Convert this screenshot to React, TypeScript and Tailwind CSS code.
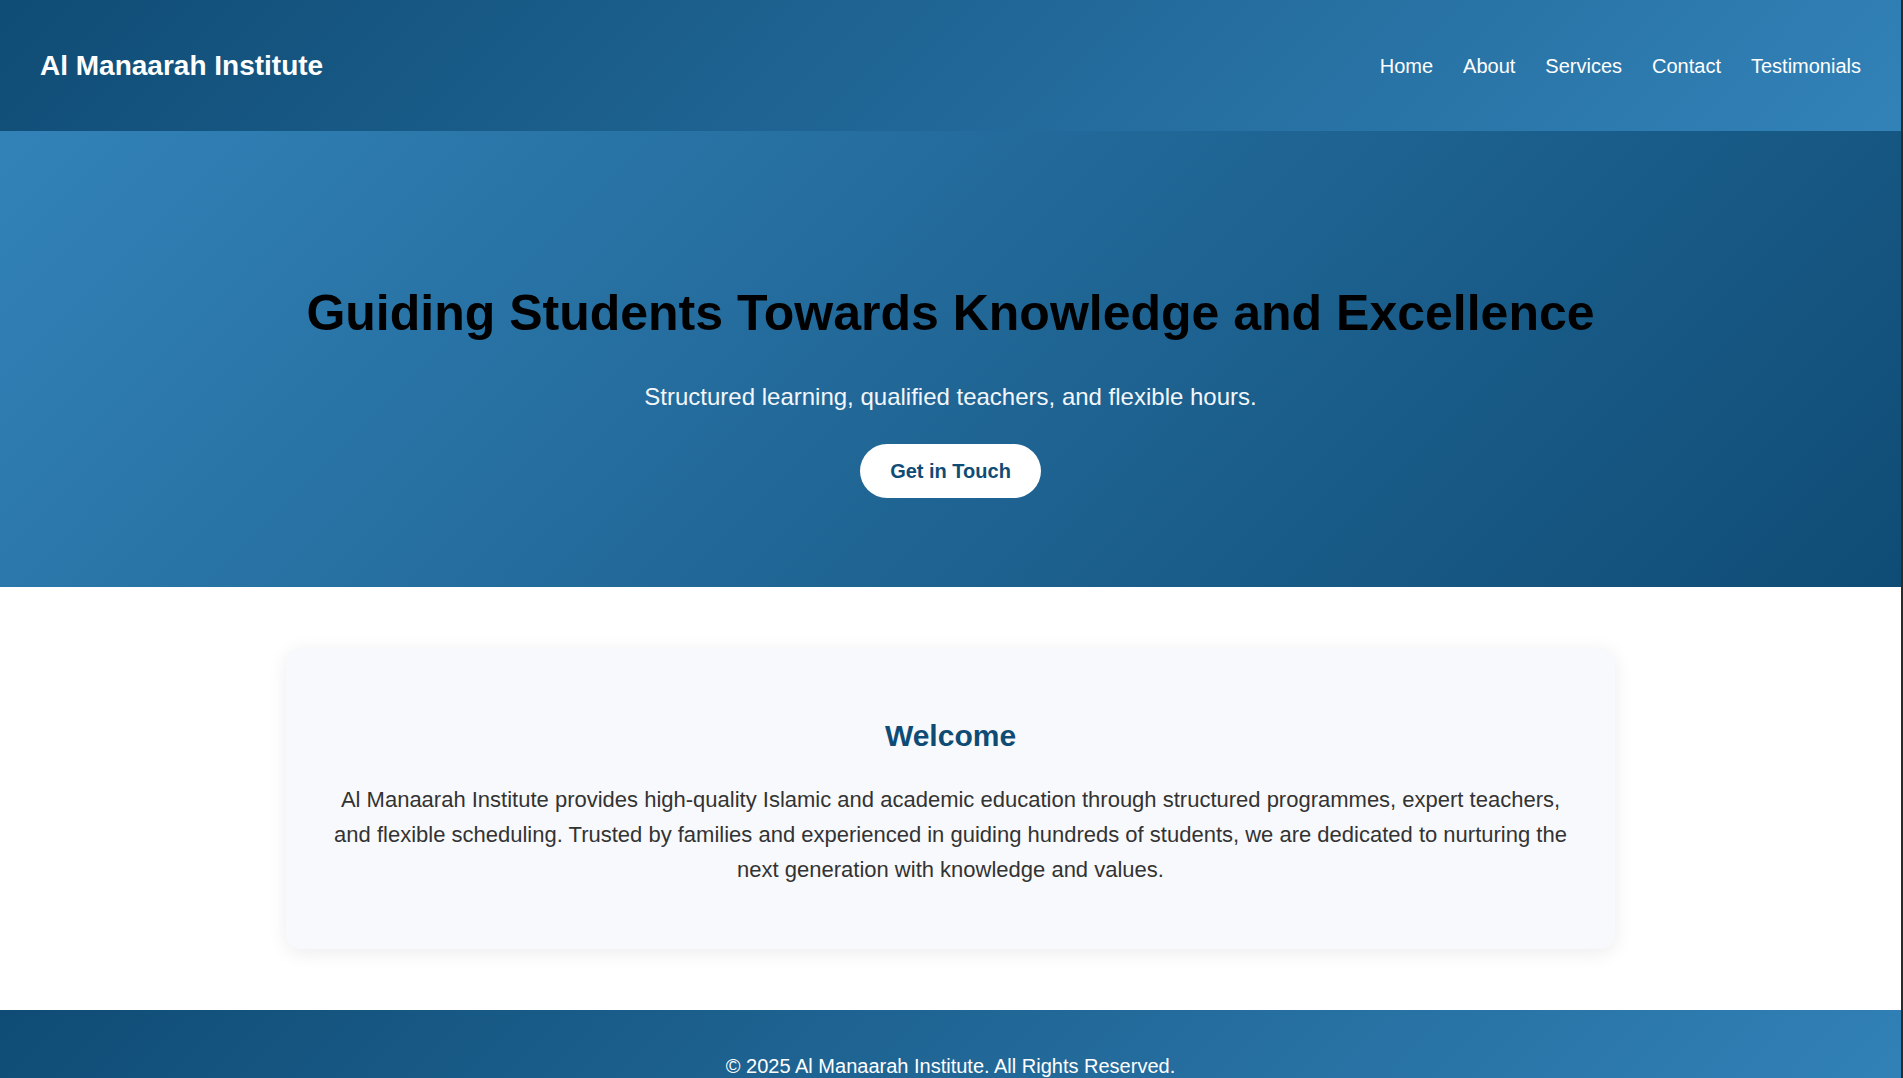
const links = ["Home", "About", "Services", "Contact", "Testimonials"];

const App = () => {
  return (
    <div className="min-h-screen w-full bg-white border-r-2 border-[#2b2b2b] font-['Liberation_Sans',Arial,sans-serif] text-[#333]">
      <header className="h-[131px] flex items-center justify-between px-10 bg-[linear-gradient(135deg,#0f4c75,#3282b8)]">
        <h1 className="text-[28px] font-bold text-white leading-none">Al Manaarah Institute</h1>
        <nav className="flex gap-[30px]">
          {links.map((l) => (
            <a key={l} href="#" className="text-[20px] text-white leading-none">
              {l}
            </a>
          ))}
        </nav>
      </header>

      <section className="h-[456px] flex flex-col items-center pt-[153px] bg-[linear-gradient(135deg,#3282b8,#0f4c75)]">
        <h2 className="text-[50px] font-bold text-black leading-[58px]">
          Guiding Students Towards Knowledge and Excellence
        </h2>
        <p className="mt-[41px] text-[24px] leading-[28px] text-[#f3f6fa]">
          Structured learning, qualified teachers, and flexible hours.
        </p>
        <button className="mt-[33px] h-[54px] px-[30px] rounded-full bg-white text-[#0f4c75] text-[20px] font-bold">
          Get in Touch
        </button>
      </section>

      <section className="py-[61px] flex justify-center">
        <div className="w-[1329px] rounded-[15px] bg-[#f8f9fc] shadow-[0_4px_20px_rgba(0,0,0,0.08)] px-12 pt-[70px] pb-[62px] text-center">
          <h3 className="text-[30px] font-bold text-[#0f4c75] leading-[36px]">Welcome</h3>
          <p className="mt-[28px] text-[22px] leading-[35px] text-[#333]">
            Al Manaarah Institute provides high-quality Islamic and academic education through structured programmes, expert teachers, and flexible scheduling. Trusted by families and experienced in guiding hundreds of students, we are dedicated to nurturing the next generation with knowledge and values.
          </p>
        </div>
      </section>

      <footer className="pt-[45px] pb-[42px] text-center bg-[linear-gradient(135deg,#0f4c75,#3282b8)]">
        <p className="text-[20px] leading-[23px] text-white">
          © 2025 Al Manaarah Institute. All Rights Reserved.
        </p>
      </footer>
    </div>
  );
};

export default App;
